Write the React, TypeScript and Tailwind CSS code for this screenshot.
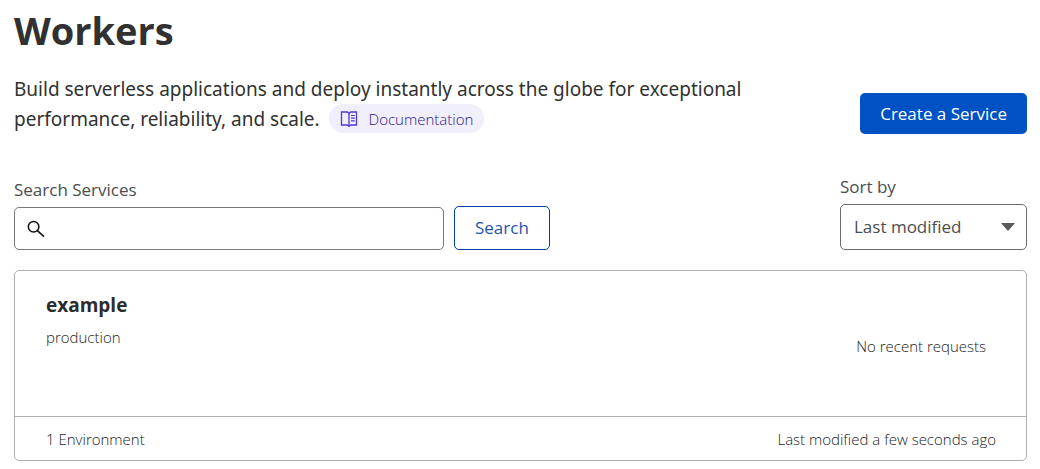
import { useState } from "react";

function BookIcon() {
  return (
    <svg width="18" height="18" viewBox="0 0 18 18" fill="none" aria-hidden="true" className="shrink-0">
      <path d="M9 3.5 7.5 2H1.5v13h5.8L9 16.4l1.7-1.4h5.8V2h-6L9 3.5Z" stroke="#4d3bd6" strokeWidth="1.3" />
      <path d="M9 3.5v12.5" stroke="#4d3bd6" strokeWidth="1.3" />
      <path d="M11 5.5h3.8M11 8.2h3.8M11 10.9h3.8" stroke="#4d3bd6" strokeWidth="1.2" />
    </svg>
  );
}

function SearchIcon() {
  return (
    <svg width="18" height="18" viewBox="0 0 18 18" fill="none" aria-hidden="true" className="shrink-0">
      <circle cx="6.6" cy="6.8" r="5.3" stroke="#111" strokeWidth="1.5" />
      <path d="m10.4 10.6 6.6 6" stroke="#111" strokeWidth="1.6" />
    </svg>
  );
}

export default function App() {
  const [query, setQuery] = useState("");
  return (
    <main className="bg-white pt-[6px] pr-[13px] pb-2 pl-[14px] font-['Open_Sans','Noto_Sans',sans-serif] text-[#36393a]">
      <header className="flex items-end justify-between gap-6">
        <div>
          <h1 className="text-[38px] leading-[48px] font-bold text-[#313131]">Workers</h1>
          <p className="mt-5 max-w-[770px] font-['Noto_Sans','Open_Sans',sans-serif] text-[19px] leading-[30px] text-[#313131]">
            Build serverless applications and deploy instantly across the globe for exceptional performance,
            reliability, and scale.{" "}
            <a
              href="#documentation"
              className="ml-1 inline-flex h-[29px] items-center gap-[11px] rounded-full bg-[#f2effd] px-[11px] align-top font-['Open_Sans','Noto_Sans',sans-serif] text-[15px] leading-5 font-light text-[#2a1590]"
            >
              <BookIcon />
              Documentation
            </a>
          </p>
        </div>
        <button
          type="button"
          className="h-[41px] shrink-0 rounded-[5px] bg-[#0051c3] px-5 text-[17px] text-white"
        >
          Create a Service
        </button>
      </header>

      <div className="mt-[41px] flex items-end justify-between gap-6">
        <form className="flex items-end gap-[10px]" onSubmit={(e) => e.preventDefault()}>
          <div>
            <label htmlFor="search" className="block text-[17px] leading-6 text-[#4a4d4e]">
              Search Services
            </label>
            <div className="mt-[5px] flex h-[43px] w-[430px] items-center gap-2 rounded-[5px] border border-[#797979] px-3">
              <SearchIcon />
              <input
                id="search"
                type="text"
                value={query}
                onChange={(e) => setQuery(e.target.value)}
                className="min-w-0 flex-1 bg-transparent text-[17px] outline-none"
              />
            </div>
          </div>
          <button
            type="submit"
            className="h-[44px] rounded-[5px] border border-[#003da1] px-5 text-[17px] text-[#1f55ad]"
          >
            Search
          </button>
        </form>
        <div>
          <label htmlFor="sort" className="block text-[17px] leading-6 text-[#4a4d4e]">
            Sort by
          </label>
          <div className="mt-[5px] grid w-[187px] items-center">
            <select
              id="sort"
              className="col-start-1 row-start-1 h-[46px] w-full appearance-none rounded-[5px] border border-[#6b6b6b] bg-white px-[13px] text-[17px] text-[#4a4d4e]"
            >
              <option>Last modified</option>
              <option>Name</option>
            </select>
            <svg
              width="14"
              height="8"
              viewBox="0 0 14 8"
              aria-hidden="true"
              className="pointer-events-none col-start-1 row-start-1 mr-3 justify-self-end"
            >
              <path d="M0 0h14L7 8Z" fill="#595959" />
            </svg>
          </div>
        </div>
      </div>

      <article className="mt-5 rounded-[5px] border border-[#b0b0b0]">
        <div className="flex min-h-[145px] justify-between pt-5 pr-10 pl-[31px]">
          <div>
            <h2 className="text-[19px] leading-7 font-bold text-[#2c2c2c]">example</h2>
            <p className="mt-1.5 text-[15px] leading-6 font-light text-[#222]">production</p>
          </div>
          <p className="mt-[43px] text-[15px] leading-6 font-light text-[#222]">No recent requests</p>
        </div>
        <footer className="flex h-11 items-center justify-between border-t border-[#b0b0b0] pr-[30px] pl-[31px] text-[15px] leading-6 font-light text-[#222]">
          <span>1 Environment</span>
          <span>Last modified a few seconds ago</span>
        </footer>
      </article>
    </main>
  );
}
